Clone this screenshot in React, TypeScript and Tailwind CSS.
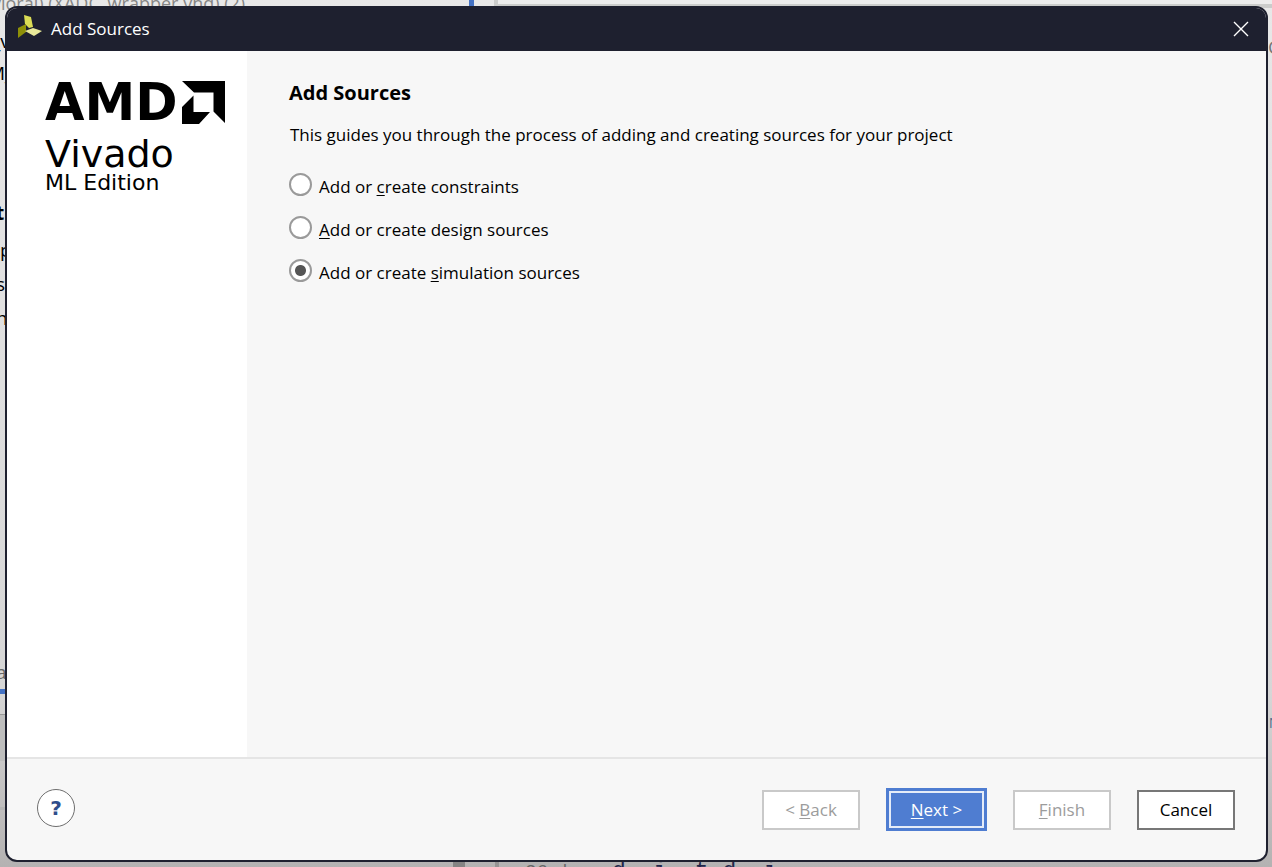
import { useState, type ReactNode } from "react";

function Key({ children }: { children: ReactNode }) {
  return <u className="underline underline-offset-2">{children}</u>;
}

const options = [
  { id: "constraints", label: <>Add or <Key>c</Key>reate constraints</> },
  { id: "design", label: <><Key>A</Key>dd or create design sources</> },
  { id: "simulation", label: <>Add or create <Key>s</Key>imulation sources</> },
];

function Backdrop() {
  return (
    <div
      aria-hidden="true"
      className="absolute inset-0 overflow-hidden bg-linear-to-b from-[#e8e8e8] via-[#d6d6d6] via-80% to-[#b4b2b2] text-[19px] leading-6 text-black"
    >
      <span className="absolute -left-2 -top-[9px] text-[18px] text-[#858585]">vioral) (XADC_wrapper.vhd) (2)</span>
      <div className="absolute left-[469px] top-0 h-2 w-[5px] bg-[#4472c4]" />
      <div className="absolute left-[494px] right-0 top-0 h-2 border-b-4 border-l-4 border-[#cbcccb] bg-[#ececec]" />
      <span className="absolute -left-2 top-[29px]">_v</span>
      <span className="absolute -left-3 top-[61px]">M_</span>
      <span className="absolute -left-1 top-[201px] font-bold">th</span>
      <span className="absolute left-0 top-[238px]">p</span>
      <span className="absolute -left-1 top-[272px]">s</span>
      <span className="absolute -left-1 top-[306px]">n</span>
      <span className="absolute -left-1 top-[632px] text-[#555]">.</span>
      <span className="absolute -left-1 top-[660px] text-[#666]">a</span>
      <div className="absolute left-0 top-[689px] h-[5px] w-2 bg-[#4472c4]" />
      <div className="absolute left-0 top-[714px] h-[47px] w-2 border-t border-[#999] bg-[#bebebe]" />
      <div className="absolute left-0 top-[807px] h-[3px] w-2 bg-[#b5b5b5]" />
      <span className="absolute -right-2 top-[35px] text-[#777]">C</span>
      <span className="absolute -right-2 top-[710px] text-[15px] text-[#54718f]">N</span>
      <div className="absolute bottom-0 left-[449px] flex h-[5px] w-[50px] justify-between">
        <div className="ml-1 w-3 bg-[#858484]" />
        <div className="w-1 bg-[#969494]" />
      </div>
      <pre className="absolute left-[525px] top-[860px] font-['Liberation_Mono',monospace] text-[19px] leading-6 text-[#666]">26 |</pre>
      <pre className="absolute left-[612px] top-[860px] font-['Liberation_Mono',monospace] text-[23px] leading-6 text-[#22264a]">d  i  t d  i</pre>
    </div>
  );
}

function VivadoMark() {
  return (
    <svg viewBox="0 0 24 24" className="mb-1 size-6" aria-hidden="true">
      <path d="M6 0L13 2L15 12L11 13L7 9Z" fill="#dbdc55" />
      <path d="M0 13L8 9V17L0 23Z" fill="#8e9008" />
      <path d="M7 16L15 13L24 16L16 21Z" fill="#e9e99a" />
    </svg>
  );
}

function Brand() {
  return (
    <div className="flex flex-col pl-[38px] pt-[30px] text-black">
      <div className="flex h-[43px] items-center gap-[5px]">
        <span className="w-[132px] font-['DejaVu_Sans',sans-serif] text-[51px] font-bold leading-[43px]">AMD</span>
        <svg viewBox="0 0 43 43" className="size-[43px] shrink-0" aria-hidden="true">
          <path d="M0 0H43V42L31.5 30.5V11.5H12Z" />
          <path d="M0 26L11.5 14.5V31H28L17 43H0Z" />
        </svg>
      </div>
      <span className="mt-2 font-['DejaVu_Sans',sans-serif] text-[38px] leading-11">Vivado</span>
      <span className="font-['DejaVu_Sans',sans-serif] text-[22px] leading-[14px]">ML Edition</span>
    </div>
  );
}

const buttonBase = "h-10 w-[98px] border-2 text-[17px] leading-6";

export default function App() {
  const [selected, setSelected] = useState("simulation");
  return (
    <main className="relative flex h-screen pb-[5px] pl-[5px] pr-1 pt-[6px] font-['Open_Sans','Noto_Sans',sans-serif]">
      <Backdrop />
      <section
        role="dialog"
        aria-labelledby="window-title"
        className="relative flex min-w-0 flex-1 flex-col overflow-hidden rounded-xl border-2 border-[#1e202f] bg-[#f7f7f7]"
      >
        <header className="flex h-[43px] shrink-0 items-center bg-[#1e202f] pb-[2px] pl-[11px] pr-[15px] text-white">
          <VivadoMark />
          <span id="window-title" className="ml-[9px] flex-1 text-[17px] leading-6">Add Sources</span>
          <button type="button" aria-label="Close" className="flex size-5 items-center justify-center">
            <svg viewBox="0 0 16 16" className="size-4" fill="none" stroke="currentColor" strokeWidth="1.4" aria-hidden="true">
              <path d="M1 1L15 15M15 1L1 15" />
            </svg>
          </button>
        </header>
        <div className="flex min-h-0 flex-1">
          <aside className="w-60 shrink-0 bg-white">
            <Brand />
          </aside>
          <div className="min-w-0 flex-1 pl-[42px] pt-[30px] text-black">
            <h1 className="text-[20px] font-bold leading-6">Add Sources</h1>
            <p className="mt-[18px] pl-px text-[17px] leading-6">
              This guides you through the process of adding and creating sources for your project
            </p>
            <fieldset className="mt-[26px] flex flex-col gap-4">
              {options.map((option) => (
                <label key={option.id} className="flex items-center gap-[7px] text-[17px] leading-6">
                  <input
                    type="radio"
                    name="source-type"
                    checked={selected === option.id}
                    onChange={() => setSelected(option.id)}
                    className="mb-1 size-[23px] shrink-0 appearance-none rounded-full border-2 border-[#9a9a9a] bg-white checked:bg-[radial-gradient(circle,#555_5px,white_6px)]"
                  />
                  <span>{option.label}</span>
                </label>
              ))}
            </fieldset>
          </div>
        </div>
        <footer className="flex h-[103px] shrink-0 items-center border-t-2 border-[#e5e5e5] pl-[30px] pr-[31px]">
          <button
            type="button"
            aria-label="Help"
            className="mb-1 size-[38px] rounded-full border border-[#6e6e6e] bg-white font-['DejaVu_Sans',sans-serif] text-[20px] font-bold leading-6 text-[#2f4d8b]"
          >
            ?
          </button>
          <div className="ml-auto flex items-center gap-[26px]">
            <button type="button" disabled className={`${buttonBase} border-[#c9c9c9] bg-white text-[#9c9c9c]`}>
              &lt; <Key>B</Key>ack
            </button>
            <button type="button" className="h-[43px] w-[101px] bg-[#4f7dd1] p-[3px] text-[17px] leading-6 text-white">
              <span className="flex h-full items-center justify-center border-2 border-[#e5ecf8]">
                <span><Key>N</Key>ext &gt;</span>
              </span>
            </button>
            <button type="button" disabled className={`${buttonBase} border-[#c9c9c9] bg-white text-[#9c9c9c]`}>
              <Key>F</Key>inish
            </button>
            <button type="button" className={`${buttonBase} border-[#777777] bg-white text-black`}>Cancel</button>
          </div>
        </footer>
      </section>
    </main>
  );
}
